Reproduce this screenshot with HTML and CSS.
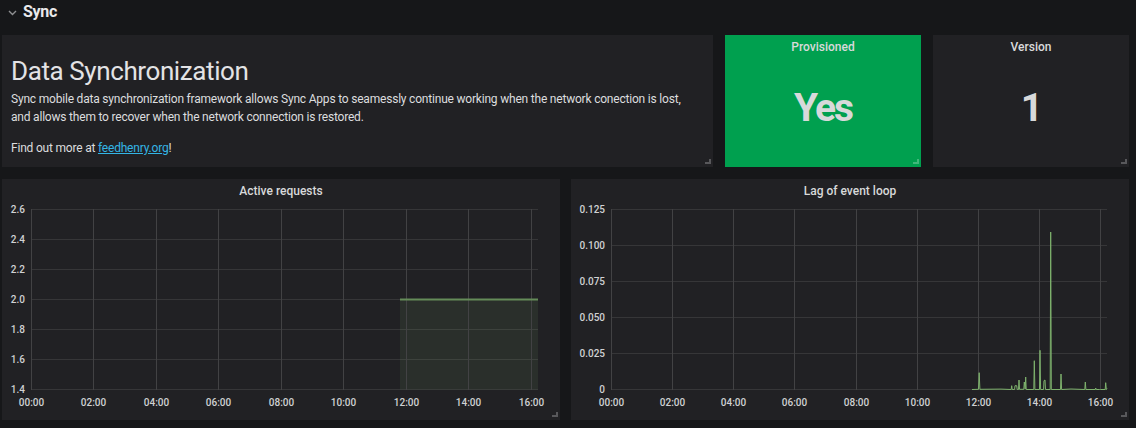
FILE: index.html
```html
<!DOCTYPE html>
<html lang="en">
<head>
<meta charset="utf-8">
<title>Sync</title>
<link rel="stylesheet" href="styles.css">
</head>
<body>
<div class="dash">
  <div class="row-header">
    <svg class="chev" width="9" height="6" viewBox="0 0 9 6"><path d="M1 1 L4.5 4.5 L8 1"/></svg>
    <span class="row-title">Sync</span>
  </div>

  <div class="row row-top">
    <section class="panel text-panel">
      <h1>Data Synchronization</h1>
      <p>Sync mobile data synchronization framework allows Sync Apps to seamessly continue working when the network conection is lost,<br>and allows them to recover when the network connection is restored.</p>
      <p>Find out more at <a href="#">feedhenry.org</a>!</p>
    </section>
    <section class="panel stat stat-green">
      <div class="panel-title">Provisioned</div>
      <div class="stat-value">Yes</div>
    </section>
    <section class="panel stat">
      <div class="panel-title">Version</div>
      <div class="stat-value">1</div>
    </section>
  </div>

  <div class="row row-bottom">
    <section class="panel graph">
      <div class="panel-title">Active requests</div>
      <svg class="chart" width="558" height="217" viewBox="0 0 558 217">
        <g class="hgrid">
          <line x1="29" x2="536" y1="6.5" y2="6.5"/>
          <line x1="29" x2="536" y1="36.5" y2="36.5"/>
          <line x1="29" x2="536" y1="66.5" y2="66.5"/>
          <line x1="29" x2="536" y1="96.5" y2="96.5"/>
          <line x1="29" x2="536" y1="126.5" y2="126.5"/>
          <line x1="29" x2="536" y1="156.5" y2="156.5"/>
          <line x1="29" x2="536" y1="186.5" y2="186.5"/>
        </g>
        <rect class="area" x="398" y="96.5" width="138" height="90"/>
        <g class="vgrid">
          <line x1="29.5" x2="29.5" y1="6" y2="187"/>
          <line x1="91.5" x2="91.5" y1="6" y2="187"/>
          <line x1="154.5" x2="154.5" y1="6" y2="187"/>
          <line x1="216.5" x2="216.5" y1="6" y2="187"/>
          <line x1="279.5" x2="279.5" y1="6" y2="187"/>
          <line x1="341.5" x2="341.5" y1="6" y2="187"/>
          <line x1="404.5" x2="404.5" y1="6" y2="187"/>
          <line x1="466.5" x2="466.5" y1="6" y2="187"/>
          <line x1="529.5" x2="529.5" y1="6" y2="187"/>
        </g>
        <line class="series-flat" x1="398" x2="536" y1="96.5" y2="96.5"/>
        <g class="ylab">
          <text x="23" y="10">2.6</text>
          <text x="23" y="40">2.4</text>
          <text x="23" y="70">2.2</text>
          <text x="23" y="100">2.0</text>
          <text x="23" y="130">1.8</text>
          <text x="23" y="160">1.6</text>
          <text x="23" y="190">1.4</text>
        </g>
        <g class="xlab">
          <text x="29.5" y="202.5">00:00</text>
          <text x="91.5" y="202.5">02:00</text>
          <text x="154.5" y="202.5">04:00</text>
          <text x="216.5" y="202.5">06:00</text>
          <text x="279.5" y="202.5">08:00</text>
          <text x="341.5" y="202.5">10:00</text>
          <text x="404.5" y="202.5">12:00</text>
          <text x="466.5" y="202.5">14:00</text>
          <text x="529.5" y="202.5">16:00</text>
        </g>
      </svg>
    </section>

    <section class="panel graph">
      <div class="panel-title">Lag of event loop</div>
      <svg class="chart" width="558" height="217" viewBox="0 0 558 217">
        <g class="hgrid">
          <line x1="40" x2="536" y1="6.5" y2="6.5"/>
          <line x1="40" x2="536" y1="42.5" y2="42.5"/>
          <line x1="40" x2="536" y1="78.5" y2="78.5"/>
          <line x1="40" x2="536" y1="114.5" y2="114.5"/>
          <line x1="40" x2="536" y1="150.5" y2="150.5"/>
          <line x1="40" x2="536" y1="186.5" y2="186.5"/>
        </g>
        <g class="vgrid">
          <line x1="40.5" x2="40.5" y1="6" y2="187"/>
          <line x1="101.5" x2="101.5" y1="6" y2="187"/>
          <line x1="162.5" x2="162.5" y1="6" y2="187"/>
          <line x1="223.5" x2="223.5" y1="6" y2="187"/>
          <line x1="285.5" x2="285.5" y1="6" y2="187"/>
          <line x1="346.5" x2="346.5" y1="6" y2="187"/>
          <line x1="407.5" x2="407.5" y1="6" y2="187"/>
          <line x1="468.5" x2="468.5" y1="6" y2="187"/>
          <line x1="529.5" x2="529.5" y1="6" y2="187"/>
        </g>
        <polyline class="series" points="401,186.5 407.5,186.3 408.2,169.7 408.9,186.3 430,186.1 440.2,186.5 440.7,182.7 441.2,186.5 443.6,186.5 444,182.7 445.7,182.7 446.2,186.5 447.5,186.5 448,177 448.5,186.3 452.8,186.3 453.3,179 454.2,186 454.7,174 455.2,186.5 462.8,186.5 463.3,157.7 463.9,186.5 468.5,186.5 469,147.3 469.6,186.5 472.6,186.5 473,177.7 474,177 474.5,186.5 479.2,186.5 479.7,29 480.3,186.5 489.5,186.5 490,171 490.6,186.5 500,186 513.8,186.5 514.3,179 514.9,186.5 524.3,186.5 524.7,185 525.2,186.5 528.6,186.5 529,186 529.5,186.5 534.2,186.5 534.7,179.7 535.3,186.5 536,185.5"/>
        <g class="ylab">
          <text x="34" y="10">0.125</text>
          <text x="34" y="46">0.100</text>
          <text x="34" y="82">0.075</text>
          <text x="34" y="118">0.050</text>
          <text x="34" y="154">0.025</text>
          <text x="34" y="190">0</text>
        </g>
        <g class="xlab">
          <text x="40.5" y="202.5">00:00</text>
          <text x="101.5" y="202.5">02:00</text>
          <text x="162.5" y="202.5">04:00</text>
          <text x="223.5" y="202.5">06:00</text>
          <text x="285.5" y="202.5">08:00</text>
          <text x="346.5" y="202.5">10:00</text>
          <text x="407.5" y="202.5">12:00</text>
          <text x="468.5" y="202.5">14:00</text>
          <text x="529.5" y="202.5">16:00</text>
        </g>
      </svg>
    </section>
  </div>
</div>
</body>
</html>
```

FILE: styles.css
```css
html, body {
  margin: 0;
  background: #161719;
}

body {
  font-family: Roboto, "Liberation Sans", Arial, sans-serif;
  color: #d8d9da;
}

.dash {
  padding: 0 7px 8px 2px;
}

.row-header {
  height: 22px;
  display: flex;
  align-items: center;
  gap: 6px;
  padding-left: 6px;
}

.chev {
  display: block;
  margin-top: 4px;
}

.chev path {
  fill: none;
  stroke: #8e8f91;
  stroke-width: 1.4;
}

.row-title {
  font-size: 16px;
  font-weight: 700;
  color: #e9e9eb;
  letter-spacing: -0.3px;
}

.row {
  display: grid;
}

.row-top {
  margin-top: 13px;
  grid-template-columns: 711px 196px 196px;
  grid-template-rows: 132px;
  column-gap: 12px;
}

.row-bottom {
  margin-top: 12px;
  grid-template-columns: 558px 558px;
  grid-template-rows: 241px;
  column-gap: 11px;
}

.panel {
  position: relative;
  background: #212124;
  min-width: 0;
  overflow: hidden;
}

.panel::after {
  content: "";
  position: absolute;
  right: 2px;
  bottom: 3px;
  width: 4px;
  height: 3px;
  border-right: 2px solid rgba(255, 255, 255, 0.25);
  border-bottom: 2px solid rgba(255, 255, 255, 0.25);
}

.text-panel {
  padding: 21px 9px 0;
}

.text-panel h1 {
  margin: 0;
  font-size: 26px;
  font-weight: 400;
  line-height: 30px;
  letter-spacing: -0.4px;
  color: #e3e3e5;
  white-space: nowrap;
}

.text-panel p {
  margin: 5px 0 0;
  font-size: 12px;
  line-height: 17.5px;
  letter-spacing: -0.2px;
  white-space: nowrap;
  color: #dcdddf;
}

.text-panel p + p {
  margin-top: 14px;
}

.text-panel a {
  color: #33b5e5;
  text-decoration: underline;
}

.panel-title {
  height: 24px;
  line-height: 24px;
  text-align: center;
  font-size: 12px;
  font-weight: 500;
  color: #d8d9da;
}

.stat {
  display: flex;
  flex-direction: column;
}

.stat-green {
  background: #00a04f;
}

.stat-value {
  flex: 1;
  display: flex;
  align-items: center;
  justify-content: center;
  padding-bottom: 10px;
  font-size: 39px;
  font-weight: 700;
  letter-spacing: -2px;
  color: #d8d9da;
}

.graph {
  display: flex;
  flex-direction: column;
}

.chart {
  display: block;
}

.hgrid line {
  stroke: #363638;
  stroke-width: 1;
}

.vgrid line {
  stroke: #424244;
  stroke-width: 1;
}

.area {
  fill: rgba(126, 178, 109, 0.1);
}

.series-flat {
  stroke: #658c59;
  stroke-width: 2;
}

.series {
  fill: none;
  stroke: #7eb26d;
  stroke-width: 1;
  stroke-linejoin: round;
}

.ylab text,
.xlab text {
  font-family: Roboto, "Liberation Sans", Arial, sans-serif;
  font-size: 10px;
  font-weight: 500;
  fill: #d0d1d3;
}

.ylab text {
  text-anchor: end;
}

.xlab text {
  text-anchor: middle;
}
```
